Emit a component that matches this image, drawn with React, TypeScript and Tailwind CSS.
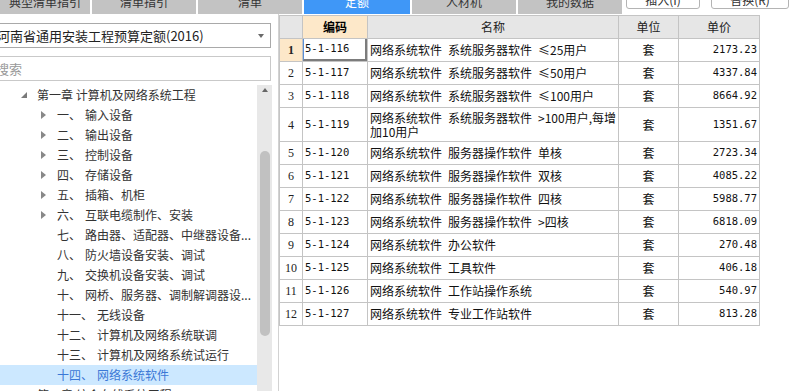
const tabs = [
  { label: "典型清单指引", w: "w-[90px]" },
  { label: "清单指引", w: "w-[104px]" },
  { label: "清单", w: "w-[104px]" },
  { label: "定额", w: "w-[106px]", active: true },
  { label: "人材机", w: "w-[104px]" },
  { label: "我的数据", w: "w-[104px]" },
];

const treeItems = [
  { n: "一、", t: "输入设备", arrow: true },
  { n: "二、", t: "输出设备", arrow: true },
  { n: "三、", t: "控制设备", arrow: true },
  { n: "四、", t: "存储设备", arrow: true },
  { n: "五、", t: "插箱、机柜", arrow: true },
  { n: "六、", t: "互联电缆制作、安装", arrow: true },
  { n: "七、", t: "路由器、适配器、中继器设备..." },
  { n: "八、", t: "防火墙设备安装、调试" },
  { n: "九、", t: "交换机设备安装、调试" },
  { n: "十、", t: "网桥、服务器、调制解调器设..." },
  { n: "十一、", t: "无线设备" },
  { n: "十二、", t: "计算机及网络系统联调" },
  { n: "十三、", t: "计算机及网络系统试运行" },
  { n: "十四、", t: "网络系统软件", selected: true },
];

const rows = [
  { code: "5-1-116", name: ["网络系统软件\u2002系统服务器软件\u2002≤25用户"], price: "2173.23" },
  { code: "5-1-117", name: ["网络系统软件\u2002系统服务器软件\u2002≤50用户"], price: "4337.84" },
  { code: "5-1-118", name: ["网络系统软件\u2002系统服务器软件\u2002≤100用户"], price: "8664.92" },
  { code: "5-1-119", name: ["网络系统软件\u2002系统服务器软件\u2002>100用户,每增", "加10用户"], price: "1351.67", tall: true },
  { code: "5-1-120", name: ["网络系统软件\u2002服务器操作软件\u2002单核"], price: "2723.34" },
  { code: "5-1-121", name: ["网络系统软件\u2002服务器操作软件\u2002双核"], price: "4085.22" },
  { code: "5-1-122", name: ["网络系统软件\u2002服务器操作软件\u2002四核"], price: "5988.77" },
  { code: "5-1-123", name: ["网络系统软件\u2002服务器操作软件\u2002>四核"], price: "6818.09" },
  { code: "5-1-124", name: ["网络系统软件\u2002办公软件"], price: "270.48" },
  { code: "5-1-125", name: ["网络系统软件\u2002工具软件"], price: "406.18" },
  { code: "5-1-126", name: ["网络系统软件\u2002工作站操作系统"], price: "540.97" },
  { code: "5-1-127", name: ["网络系统软件\u2002专业工作站软件"], price: "813.28" },
];

const cjk = "font-['Noto_Sans_CJK_SC',sans-serif]";
const mono = "font-['DejaVu_Sans_Mono',monospace]";

function TopBar() {
  return (
    <div className={`-mt-[10px] flex h-[24px] items-start ${cjk}`}>
      <div className="flex h-[24px] gap-[2px]">
        {tabs.map((tab) => (
          <div
            key={tab.label}
            className={`flex h-[24px] items-center justify-center text-[12px] ${tab.w} ${
              tab.active ? "bg-[#3f97f7] text-white" : "bg-[#c3c3c3] text-[#333]"
            }`}
          >
            {tab.label}
          </div>
        ))}
      </div>
      <button
        type="button"
        className="ml-[4px] flex h-[19px] w-[78px] items-center justify-center rounded-[3px] border border-[#b4b4b4] bg-white text-[12px] text-[#333]"
      >
        插入(I)
      </button>
      <button
        type="button"
        className="ml-[11px] flex h-[19px] w-[78px] shrink-0 items-center justify-center rounded-[3px] border border-[#b4b4b4] bg-white text-[12px] text-[#333]"
      >
        替换(R)
      </button>
    </div>
  );
}

function LeftPanel() {
  return (
    <div className={`flex w-[278px] shrink-0 flex-col ${cjk}`}>
      <div className="-ml-[10px] mt-[9px] flex h-[25px] w-[281px] items-center justify-between border border-[#a9a9a9] pl-[6px] pr-[6px]">
        <span className="text-[13px] text-[#222]">河南省通用安装工程预算定额(2016)</span>
        <span className="h-0 w-0 border-x-[3px] border-t-[4px] border-x-transparent border-t-[#6a6a6a]" />
      </div>
      <div className="-ml-[10px] mt-[8px] flex h-[25px] w-[281px] items-center border border-[#c9c9c9] pl-[5px]">
        <span className="text-[13px] text-[#999]">搜索</span>
      </div>
      <div className="mt-[4px] flex min-h-0 flex-1">
        <div className="w-[257px] overflow-hidden text-[12px] text-[#333]">
          <div className="flex h-[20px] items-center pl-[21px]">
            <span className="h-0 w-0 border-b-[6px] border-l-[6px] border-b-[#7a7a7a] border-l-transparent" />
            <span className="ml-[10px] whitespace-nowrap">第一章 计算机及网络系统工程</span>
          </div>
          {treeItems.map((item) => (
            <div
              key={item.n}
              className={`flex h-[20px] items-center whitespace-nowrap pl-[41px] ${
                item.selected ? "bg-[#cce8ff] text-[#3b78d6]" : ""
              }`}
            >
              <span className="flex w-[16px] items-center">
                {item.arrow && (
                  <span className="h-0 w-0 border-y-[4px] border-l-[5px] border-y-transparent border-l-[#888]" />
                )}
              </span>
              <span>{item.n}</span>
              <span className="ml-[4px]">{item.t}</span>
            </div>
          ))}
          <div className="flex h-[20px] items-center pl-[21px]">
            <span className="h-0 w-0 border-y-[4px] border-l-[5px] border-y-transparent border-l-[#888]" />
            <span className="ml-[11px] whitespace-nowrap">第二章 综合布线系统工程</span>
          </div>
        </div>
        <div className="flex w-[15px] flex-col items-center bg-[#e8e8e8] pt-[3px]">
          <span className="h-0 w-0 border-x-[3.5px] border-b-[4px] border-x-transparent border-b-[#666]" />
          <div className="mt-[59px] h-[185px] w-[10px] rounded-full bg-[#c1c1c1]" />
        </div>
      </div>
    </div>
  );
}

function Table() {
  const cell = "border border-[#c4c4c4]";
  return (
    <table className="mt-[1px] w-[481px] table-fixed border-collapse">
      <colgroup>
        <col className="w-[23px]" />
        <col className="w-[65px]" />
        <col className="w-[251px]" />
        <col className="w-[60px]" />
        <col className="w-[81px]" />
      </colgroup>
      <thead>
        <tr className={`h-[23px] text-[12px] ${cjk}`}>
          <th className={`${cell} bg-[#e6e6e6]`} />
          <th className={`${cell} bg-[#fde8c9] font-bold text-black`}>编码</th>
          <th className={`${cell} bg-[#e6e6e6] font-normal text-[#222]`}>名称</th>
          <th className={`${cell} bg-[#e6e6e6] font-normal text-[#222]`}>单位</th>
          <th className={`${cell} bg-[#e6e6e6] font-normal text-[#222]`}>单价</th>
        </tr>
      </thead>
      <tbody>
        {rows.map((r, i) => (
          <tr key={r.code} className={r.tall ? "h-[34px]" : "h-[23px]"}>
            <td
              className={`${cell} p-0 text-center font-['Liberation_Serif',serif] text-[12px] text-[#222] ${
                i === 0 ? "bg-[#fde8c9] font-bold" : ""
              }`}
            >
              {i + 1}
            </td>
            <td className={`${cell} p-0 ${mono} text-[10.5px] text-[#111]`}>
              {i === 0 ? (
                <div className="flex h-[22px] items-center border-b-2 border-l border-r-2 border-b-[#7c7c7c] border-l-[#5b8fd6] border-r-[#7c7c7c] pl-[1px]">
                  {r.code}
                </div>
              ) : (
                <div className="pl-[2px]">{r.code}</div>
              )}
            </td>
            <td className={`${cell} whitespace-nowrap py-0 pl-[2px] pr-0 ${cjk} text-[12px] leading-[14px] text-[#111]`}>
              {r.name.map((line, k) => (
                <div key={k}>{line}</div>
              ))}
            </td>
            <td className={`${cell} p-0 text-center ${cjk} text-[12px] text-[#111]`}>套</td>
            <td className={`${cell} py-0 pl-0 pr-[2px] text-right ${mono} text-[10.5px] text-[#111]`}>{r.price}</td>
          </tr>
        ))}
      </tbody>
    </table>
  );
}

export default function App() {
  return (
    <div className="h-[391px] w-[789px] overflow-hidden bg-white">
      <TopBar />
      <div className="flex h-[377px]">
        <LeftPanel />
        <div className="flex-1 border-l border-[#d2d2d2]">
          <Table />
        </div>
      </div>
    </div>
  );
}
